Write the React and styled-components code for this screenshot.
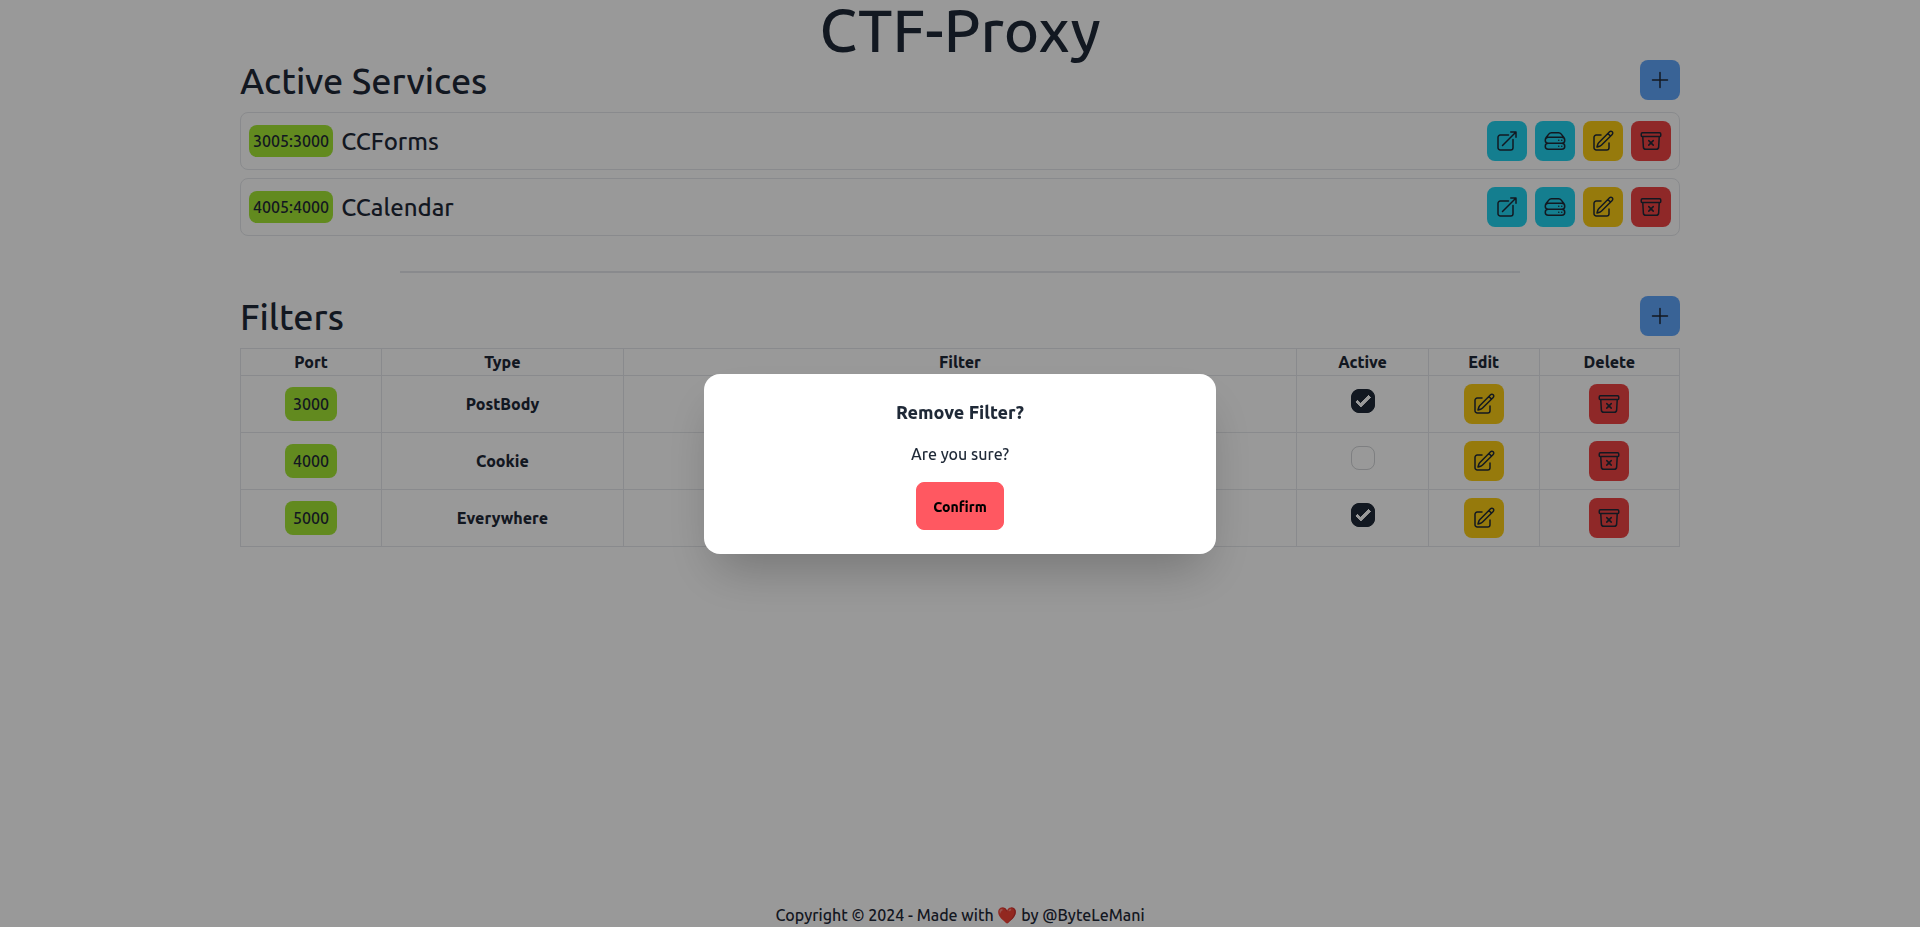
import React, { useState } from "react";
import styled, { createGlobalStyle } from "styled-components";
import {
  HiOutlinePlus,
  HiOutlineArrowTopRightOnSquare,
  HiOutlineServerStack,
  HiOutlinePencilSquare,
  HiOutlineArchiveBoxXMark,
} from "react-icons/hi2";

const GlobalStyle = createGlobalStyle`
  *, *::before, *::after { box-sizing: border-box; }
  body {
    margin: 0;
    background: #ffffff;
    color: #1f2937;
    font-family: Ubuntu, "Noto Sans", "Open Sans", sans-serif;
    font-size: 16px;
    font-weight: 500;
    line-height: 24px;
  }
  button { font: inherit; color: inherit; }
  h1, h2, h3, p { margin: 0; font-weight: 500; }
`;

const Page = styled.div`
  display: flex;
  flex-direction: column;
  align-items: center;
  min-height: 100vh;
`;

const Title = styled.h1`
  font-size: 60px;
  line-height: 60px;
`;

const Content = styled.main`
  width: 75%;
  flex: 1;
`;

const SectionHeader = styled.header`
  display: flex;
  align-items: center;
  justify-content: space-between;
  margin-bottom: 12px;
`;

const SectionTitle = styled.h2`
  padding-top: 2px;
  font-size: 36px;
  line-height: 38px;
`;

const tones = {
  blue: "#60a5fa",
  cyan: "#22d3ee",
  yellow: "#facc15",
  red: "#ef4444",
};

const IconButton = styled.button`
  display: inline-flex;
  padding: 8px;
  border: 0;
  border-radius: 8px;
  background: ${({ $tone }) => tones[$tone]};
  cursor: pointer;

  svg {
    width: 24px;
    height: 24px;
  }
`;

const ServiceList = styled.ul`
  display: flex;
  flex-direction: column;
  gap: 8px;
  margin: 0;
  padding: 0;
  list-style: none;
`;

const ServiceRow = styled.li`
  display: flex;
  align-items: center;
  gap: 8px;
  padding: 8px;
  border: 1px solid #e5e7eb;
  border-radius: 8px;
`;

const ServiceName = styled.span`
  flex: 1;
  padding-top: 2px;
  font-size: 24px;
  line-height: 32px;
`;

const Port = styled.span`
  display: inline-block;
  padding: 4px;
  border-radius: 8px;
  background: #a3e635;
`;

const TablePort = styled(Port)`
  padding: 5px 8px;
`;

const Divider = styled.hr`
  width: calc(100% - 320px);
  height: 2px;
  margin: 35px auto 23px;
  border: 0;
  background: #e5e7eb;
`;

const FilterTable = styled.table`
  width: 100%;
  border-collapse: collapse;
  table-layout: fixed;
  text-align: center;

  th,
  td {
    border: 1px solid #e5e7eb;
    font-weight: 800;
  }

  th {
    padding: 1px;
  }

  td {
    padding: 8px;
  }
`;

const Column = styled.col`
  width: ${({ $width }) => $width};
`;

const ButtonCell = styled.td`
  line-height: 0;
`;

const PortCell = styled.td`
  && {
    font-weight: 500;
  }
`;

const CheckCell = styled.td`
  && {
    padding: 2px 8px 8px;
    line-height: 0;
  }
`;

const Checkbox = styled.input`
  appearance: none;
  width: 24px;
  height: 24px;
  margin: 0;
  border: 1px solid rgba(31, 41, 55, 0.2);
  border-radius: 8px;
  cursor: pointer;

  &:checked {
    border-color: #1f2937;
    background-color: #1f2937;
    background-image:
      linear-gradient(-45deg, transparent 65%, #1f2937 65.99%),
      linear-gradient(45deg, transparent 75%, #1f2937 75.99%),
      linear-gradient(-45deg, #1f2937 40%, transparent 40.99%),
      linear-gradient(45deg, #1f2937 30%, #ffffff 30.99%, #ffffff 40%, transparent 40.99%),
      linear-gradient(-45deg, #ffffff 50%, #1f2937 50.99%);
  }
`;

const Footer = styled.footer`
  text-align: center;
`;

const Backdrop = styled.div`
  position: fixed;
  inset: 0;
  display: flex;
  align-items: center;
  justify-content: center;
  background: rgba(0, 0, 0, 0.4);
`;

const Dialog = styled.section`
  display: flex;
  flex-direction: column;
  align-items: center;
  gap: 16px;
  width: 100%;
  max-width: 512px;
  padding: 24px;
  border-radius: 16px;
  background: #ffffff;
  box-shadow: 0 25px 50px -12px rgba(0, 0, 0, 0.25);
`;

const DialogTitle = styled.h3`
  font-size: 18px;
  line-height: 28px;
  font-weight: 800;
`;

const ConfirmButton = styled.button`
  height: 48px;
  padding: 2px 16px 0;
  border: 1px solid #ff5861;
  border-radius: 8px;
  background: #ff5861;
  color: #000000;
  font-size: 14px;
  font-weight: 800;
  cursor: pointer;
`;

const services = [
  { ports: "3005:3000", name: "CCForms" },
  { ports: "4005:4000", name: "CCalendar" },
];

const initialFilters = [
  { port: 3000, type: "PostBody", active: true },
  { port: 4000, type: "Cookie", active: false },
  { port: 5000, type: "Everywhere", active: true },
];

const columns = [
  { label: "Port", width: "9.8%" },
  { label: "Type", width: "16.8%" },
  { label: "Filter", width: "46.8%" },
  { label: "Active", width: "9.15%" },
  { label: "Edit", width: "7.7%" },
  { label: "Delete", width: "9.75%" },
];

function Service({ ports, name }) {
  return (
    <ServiceRow>
      <Port>{ports}</Port>
      <ServiceName>{name}</ServiceName>
      <IconButton $tone="cyan" aria-label={`Open ${name}`}>
        <HiOutlineArrowTopRightOnSquare />
      </IconButton>
      <IconButton $tone="cyan" aria-label={`${name} server`}>
        <HiOutlineServerStack />
      </IconButton>
      <IconButton $tone="yellow" aria-label={`Edit ${name}`}>
        <HiOutlinePencilSquare />
      </IconButton>
      <IconButton $tone="red" aria-label={`Delete ${name}`}>
        <HiOutlineArchiveBoxXMark />
      </IconButton>
    </ServiceRow>
  );
}

export default function App() {
  const [filters, setFilters] = useState(initialFilters);
  const [confirming, setConfirming] = useState(true);

  const toggle = (port) =>
    setFilters((list) =>
      list.map((f) => (f.port === port ? { ...f, active: !f.active } : f))
    );

  return (
    <>
      <GlobalStyle />
      <Page>
        <Title>CTF-Proxy</Title>
        <Content>
          <SectionHeader>
            <SectionTitle>Active Services</SectionTitle>
            <IconButton $tone="blue" aria-label="Add service">
              <HiOutlinePlus />
            </IconButton>
          </SectionHeader>
          <ServiceList>
            {services.map((s) => (
              <Service key={s.name} {...s} />
            ))}
          </ServiceList>
          <Divider />
          <SectionHeader>
            <SectionTitle>Filters</SectionTitle>
            <IconButton $tone="blue" aria-label="Add filter">
              <HiOutlinePlus />
            </IconButton>
          </SectionHeader>
          <FilterTable>
            <colgroup>
              {columns.map((c) => (
                <Column key={c.label} $width={c.width} />
              ))}
            </colgroup>
            <thead>
              <tr>
                {columns.map((c) => (
                  <th key={c.label} scope="col">{c.label}</th>
                ))}
              </tr>
            </thead>
            <tbody>
              {filters.map((f) => (
                <tr key={f.port}>
                  <PortCell>
                    <TablePort>{f.port}</TablePort>
                  </PortCell>
                  <td>{f.type}</td>
                  <td />
                  <CheckCell>
                    <Checkbox
                      type="checkbox"
                      aria-label={`${f.type} active`}
                      checked={f.active}
                      onChange={() => toggle(f.port)}
                    />
                  </CheckCell>
                  <ButtonCell>
                    <IconButton $tone="yellow" aria-label={`Edit ${f.type}`}>
                      <HiOutlinePencilSquare />
                    </IconButton>
                  </ButtonCell>
                  <ButtonCell>
                    <IconButton
                      $tone="red"
                      aria-label={`Delete ${f.type}`}
                      onClick={() => setConfirming(true)}
                    >
                      <HiOutlineArchiveBoxXMark />
                    </IconButton>
                  </ButtonCell>
                </tr>
              ))}
            </tbody>
          </FilterTable>
        </Content>
        <Footer>Copyright © 2024 - Made with ❤️ by @ByteLeMani</Footer>
      </Page>
      {confirming && (
        <Backdrop>
          <Dialog role="dialog" aria-modal="true" aria-labelledby="remove-title">
            <DialogTitle id="remove-title">Remove Filter?</DialogTitle>
            <p>Are you sure?</p>
            <ConfirmButton onClick={() => setConfirming(false)}>Confirm</ConfirmButton>
          </Dialog>
        </Backdrop>
      )}
    </>
  );
}
